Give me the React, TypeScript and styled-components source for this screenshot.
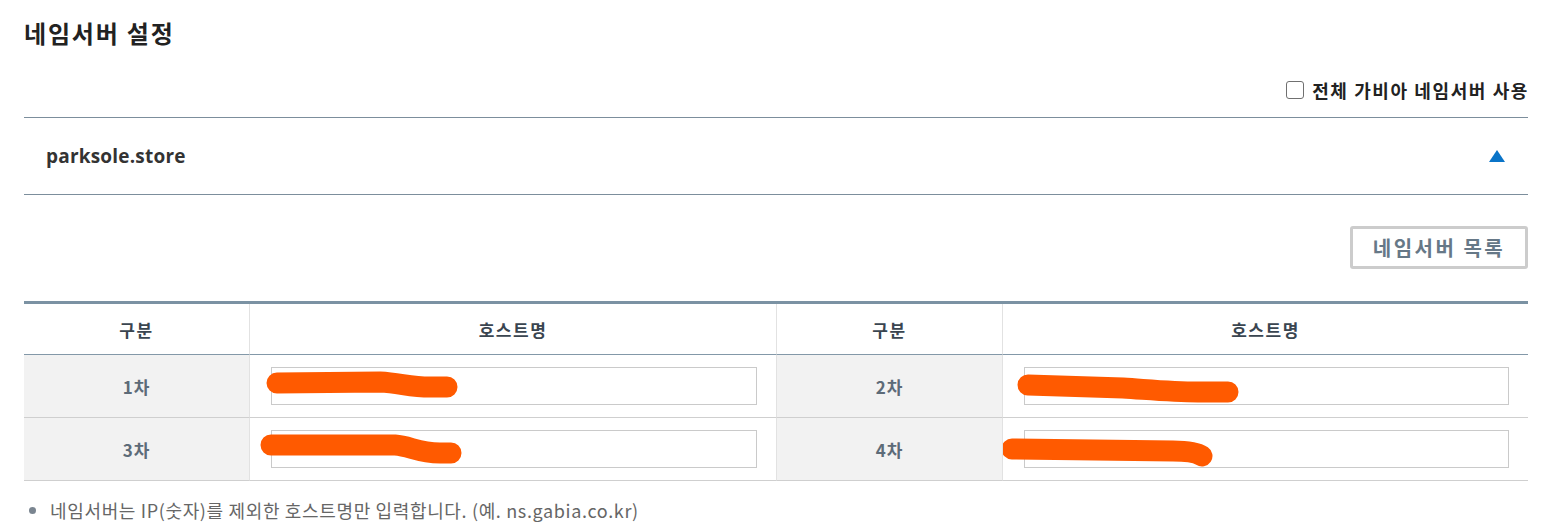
import React from 'react';
import styled, { createGlobalStyle } from 'styled-components';

const GlobalStyle = createGlobalStyle`
  body {
    margin: 0;
    background: #fff;
    font-family: "Noto Sans", "Noto Sans CJK KR", sans-serif;
    color: #333;
  }
`;

const Page = styled.div`
  width: 1504px;
  padding: 14px 0 0 24px;
`;

const Title = styled.h2`
  margin: 0;
  font-size: 24px;
  font-weight: 700;
  line-height: 38px;
  letter-spacing: 1.8px;
  color: #222;
  font-family: "Noto Sans CJK KR", sans-serif;
`;

const AllRow = styled.div`
  display: flex;
  justify-content: flex-end;
  align-items: center;
  height: 40px;
  margin-top: 18px;
  padding-bottom: 7px;
  border-bottom: 1px solid #7c8e9c;
`;

const CheckLabel = styled.label`
  display: flex;
  align-items: center;
  gap: 8px;
  font-family: "Noto Sans CJK KR", sans-serif;
  font-size: 18px;
  font-weight: 700;
  color: #222;
  letter-spacing: 1.6px;
  margin-right: -1px;
`;

const Box = styled.span`
  width: 18px;
  height: 18px;
  border: 1.5px solid #707070;
  border-radius: 3px;
  box-sizing: border-box;
`;

const DomainRow = styled.div`
  display: flex;
  align-items: center;
  justify-content: space-between;
  height: 76px;
  padding: 0 22px;
  border-bottom: 1px solid #7c8e9c;
`;

const Domain = styled.span`
  font-size: 19px;
  font-weight: 700;
  color: #333;
  letter-spacing: 0.2px;
  font-family: "Open Sans", "Noto Sans", sans-serif;
`;

const Caret = styled.span`
  width: 0;
  height: 0;
  border-left: 8.5px solid transparent;
  border-right: 8.5px solid transparent;
  border-bottom: 12px solid #0a74c8;
  margin-right: 1px;
`;

const Toolbar = styled.div`
  display: flex;
  justify-content: flex-end;
  padding: 31px 0 32px;
`;

const ListButton = styled.button`
  width: 178px;
  height: 43px;
  border: 3px solid #ccc;
  border-radius: 3px;
  background: #fff;
  color: #667887;
  font-family: "Noto Sans CJK KR", sans-serif;
  font-size: 20px;
  font-weight: 700;
  letter-spacing: 2.5px;
  padding: 0;
`;

const Table = styled.div`
  display: grid;
  grid-template-columns: 226px 527px 226px 525px;
  border-top: 3px solid #7b92a3;
`;

const Head = styled.div<{ $last?: boolean }>`
  height: 50px;
  display: flex;
  align-items: center;
  justify-content: center;
  border-bottom: 1px solid #8398a8;
  border-right: ${p => (p.$last ? 'none' : '1px solid #e2e2e2')};
  font-family: "Noto Sans CJK KR", sans-serif;
  font-size: 17px;
  font-weight: 700;
  letter-spacing: 1.5px;
  color: #3a4550;
`;

const Label = styled.div`
  height: 62px;
  display: flex;
  align-items: center;
  justify-content: center;
  background: #f2f2f2;
  border-bottom: 1px solid #cfcfcf;
  border-right: 1px solid #e2e2e2;
  font-family: "Noto Sans CJK KR", sans-serif;
  font-size: 17px;
  font-weight: 700;
  letter-spacing: 1px;
  color: #5d6b78;
`;

const InputCell = styled.div<{ $last?: boolean }>`
  position: relative;
  height: 62px;
  display: flex;
  align-items: center;
  padding: 0 19px 0 21px;
  border-bottom: 1px solid #cfcfcf;
  border-right: ${p => (p.$last ? 'none' : '1px solid #e2e2e2')};
`;

const Field = styled.input`
  width: 100%;
  height: 38px;
  box-sizing: border-box;
  border: 1px solid #cacaca;
  outline: none;
  font-size: 14px;
  color: #444;
`;

const Scribble = styled.svg`
  position: absolute;
  left: 0;
  top: 0;
  pointer-events: none;
`;

const Note = styled.ul`
  margin: 16px 0 0;
  padding: 0 0 0 26px;
  font-family: "Noto Sans CJK KR", sans-serif;
  font-size: 18px;
  line-height: 26px;
  color: #666;
  letter-spacing: 0.65px;

  li::marker {
    color: #7a8590;
    font-size: 18px;
  }
`;

const marks: Record<string, string> = {
  '1': 'M27 28 L130 27 C150 28 160 32 180 32 L197 32',
  '2': 'M25 30 L120 33 C150 35 170 37 195 37 L225 37',
  '3': 'M21 27 L145 27 C160 28 168 35 190 35 L201 35',
  '4': 'M9 31 L170 33 C190 33 196 36 199 38',
};

const rows = [
  ['1', '2'],
  ['3', '4'],
];

function Host({ n, last }: { n: string; last?: boolean }) {
  return (
    <InputCell $last={last}>
      <Field defaultValue="" />
      <Scribble width="260" height="62">
        <path d={marks[n]} stroke="#ff5a00" strokeWidth="21" strokeLinecap="round" fill="none" />
      </Scribble>
    </InputCell>
  );
}

export default function App() {
  return (
    <>
      <GlobalStyle />
      <Page>
        <Title>네임서버 설정</Title>
        <AllRow>
          <CheckLabel>
            <Box />
            전체 가비아 네임서버 사용
          </CheckLabel>
        </AllRow>
        <DomainRow>
          <Domain>parksole.store</Domain>
          <Caret />
        </DomainRow>
        <Toolbar>
          <ListButton>네임서버 목록</ListButton>
        </Toolbar>
        <Table>
          <Head>구분</Head>
          <Head>호스트명</Head>
          <Head>구분</Head>
          <Head $last>호스트명</Head>
          {rows.map(([a, b]) => (
            <React.Fragment key={a}>
              <Label>{a}차</Label>
              <Host n={a} />
              <Label>{b}차</Label>
              <Host n={b} last />
            </React.Fragment>
          ))}
        </Table>
        <Note>
          <li>네임서버는 IP(숫자)를 제외한 호스트명만 입력합니다. (예. ns.gabia.co.kr)</li>
        </Note>
      </Page>
    </>
  );
}
